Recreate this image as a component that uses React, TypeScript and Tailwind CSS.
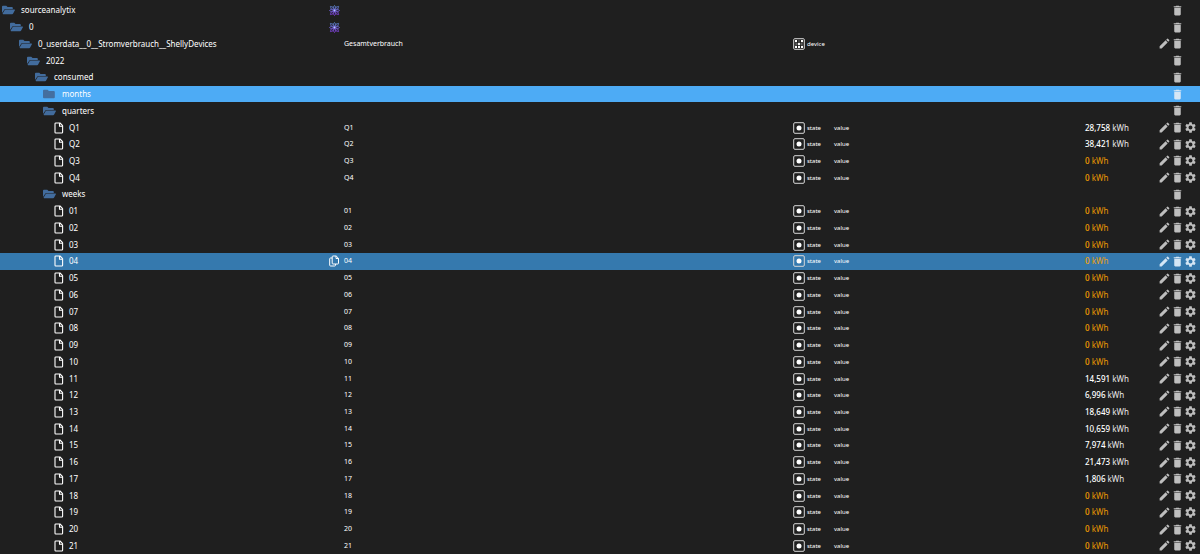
import { MdDelete, MdEdit, MdSettings } from "react-icons/md";

type Row = {
    id: string;
    depth: number;
    kind: "folder" | "open" | "state";
    name?: string;
    adapter?: boolean;
    device?: boolean;
    value?: string;
    selected?: boolean;
    hovered?: boolean;
};

const INDENT = ["pl-[2px]", "pl-[10px]", "pl-[19px]", "pl-[27px]", "pl-[35px]", "pl-[43px]", "pl-[54px]"];

const state = (id: string, value = "0"): Row => ({ id, depth: 6, kind: "state", name: id, value });

const rows: Row[] = [
    { id: "sourceanalytix", depth: 0, kind: "open", adapter: true },
    { id: "0", depth: 1, kind: "open", adapter: true },
    { id: "0_userdata__0__Stromverbrauch__ShellyDevices", depth: 2, kind: "open", name: "Gesamtverbrauch", device: true },
    { id: "2022", depth: 3, kind: "open" },
    { id: "consumed", depth: 4, kind: "open" },
    { id: "months", depth: 5, kind: "folder", selected: true },
    { id: "quarters", depth: 5, kind: "open" },
    state("Q1", "28,758"),
    state("Q2", "38,421"),
    state("Q3"),
    state("Q4"),
    { id: "weeks", depth: 5, kind: "open" },
    state("01"),
    state("02"),
    state("03"),
    { ...state("04"), hovered: true },
    state("05"),
    state("06"),
    state("07"),
    state("08"),
    state("09"),
    state("10"),
    state("11", "14,591"),
    state("12", "6,996"),
    state("13", "18,649"),
    state("14", "10,659"),
    state("15", "7,974"),
    state("16", "21,473"),
    state("17", "1,806"),
    state("18"),
    state("19"),
    state("20"),
    state("21"),
];

function FileIcon() {
    return (
        <svg viewBox="0 0 10 12" className="h-3 w-[10px] shrink-0" fill="none" stroke="currentColor" strokeWidth="1.1" strokeLinejoin="round">
            <path d="M1.800 1h4.200L8.600 3.700V10.200a.8.8 0 0 1-.8.8H1.800a.8.8 0 0 1-.8-.8V1.800a.8.8 0 0 1 .8-.8Z" />
            <path d="M5.500 1v3.200h3.100" />
        </svg>
    );
}

function FolderIcon() {
    return (
        <svg viewBox="0 0 13 12" className="h-3 w-[13px] shrink-0" fill="#446f9f">
            <path d="M1 1.800h3.600l1.300 1.200h4.900a1 1 0 0 1 1 1V9.200a1 1 0 0 1-1 1H1a1 1 0 0 1-1-1V2.800a1 1 0 0 1 1-1Z" />
        </svg>
    );
}

function FolderOpenIcon() {
    return (
        <svg viewBox="0 0 13 12" className="h-3 w-[13px] shrink-0" fill="#426c9d">
            <path d="M.9 1.800h3.400l1.200 1.100h4.400a.9.9 0 0 1 .9.900v1.200H3.500a1.500 1.500 0 0 0-1.300.7L0 9V2.700A.9.9 0 0 1 .9 1.800Z" />
            <path d="M3.500 5.500h9c.4 0 .6.4.4.7l-1.900 3.500a.9.9 0 0 1-.8.500H1.100c-.4 0-.6-.4-.4-.7l2-3.500a.9.9 0 0 1 .8-.5Z" />
        </svg>
    );
}

function CopyIcon() {
    return (
        <svg viewBox="0 0 12 12" className="h-3 w-3" fill="none" stroke="currentColor" strokeWidth="1" strokeLinejoin="round">
            <path d="M4 1h3.200l2.300 2.300V8.200a.8.8 0 0 1-.8.8H4a.8.8 0 0 1-.8-.8V1.800A.8.8 0 0 1 4 1Z" />
            <path d="M7 1v2.500h2.500M3.200 3H1.500a.8.8 0 0 0-.8.8v6.400a.8.8 0 0 0 .8.8h4.200a.8.8 0 0 0 .8-.8V9" />
        </svg>
    );
}

function AdapterIcon() {
    return (
        <svg viewBox="0 0 24 24" className="h-[11px] w-[11px]" fill="none" strokeWidth="1.600">
            <defs>
                <linearGradient id="adapter" x1="0" y1="0" x2="0" y2="24" gradientUnits="userSpaceOnUse">
                    <stop stopColor="#5c93d6" />
                    <stop offset="1" stopColor="#8b35e8" />
                </linearGradient>
            </defs>
            <g stroke="url(#adapter)">
                <path d="M12 1l3.500 5L12 12 8.500 6ZM12 23l3.500-5L12 12l-3.500 6ZM1 12l5-3.500L12 12l-6 3.500ZM23 12l-5-3.500L12 12l6 3.500Z" />
                <path d="M3 3l7 2 2 7-7-2ZM21 3l-7 2-2 7 7-2ZM3 21l7-2 2-7-7 2ZM21 21l-7-2-2-7 7 2Z" />
            </g>
            <circle cx="12" cy="12" r="2" fill="#b7c6ff" />
        </svg>
    );
}

function StateIcon() {
    return (
        <svg viewBox="0 0 12 12" className="h-3 w-3 shrink-0">
            <rect x=".7" y=".7" width="10.600" height="10.600" rx="1.200" fill="none" stroke="#d8d8d8" />
            <circle cx="6" cy="6" r="2.500" fill="#fff" />
        </svg>
    );
}

function DeviceIcon() {
    return (
        <svg viewBox="0 0 12 12" className="h-3 w-3 shrink-0" fill="none" stroke="#d8d8d8">
            <rect x=".7" y=".7" width="10.600" height="10.600" rx="1" />
            <g fill="#fff" stroke="none">
                <rect x="2" y="2" width="2" height="2" />
                <rect x="8" y="2" width="2" height="2" />
                <rect x="5" y="5" width="2" height="2" />
                <rect x="2" y="8" width="2" height="2" />
                <rect x="5" y="8" width="2" height="2" />
                <rect x="8" y="8" width="2" height="2" />
            </g>
            <path d="M3 4v4M6 2v6M9 4v4M3 6h6" strokeWidth=".4" />
        </svg>
    );
}

function TreeIcon({ kind }: { kind: Row["kind"] }) {
    if (kind === "state") return <FileIcon />;
    return kind === "folder" ? <FolderIcon /> : <FolderOpenIcon />;
}

function ObjectRow({ row }: { row: Row }) {
    const isState = row.kind === "state";
    const background = row.selected ? "bg-[#4dabf5]" : row.hovered ? "bg-[#3579ae]" : "";
    const action = row.selected || row.hovered ? "text-[#d5e6f5]" : "text-[#bebebe]";
    const button = "flex h-[13px] w-[13px] items-center justify-center";

    return (
        <tr className={`grid min-h-4 flex-1 grid-cols-[minmax(0,329fr)_minmax(0,464fr)_41px_minmax(0,251fr)_73px_42px] items-center ${background}`}>
            <td className={`flex items-center text-[8px] ${isState ? "gap-[5px]" : "gap-[6px]"} ${INDENT[row.depth]}`}>
                <TreeIcon kind={row.kind} />
                <span>{row.id}</span>
            </td>
            <td className="flex items-center gap-[3px] text-[7px]">
                <span className="flex w-3 shrink-0">
                    {row.adapter && <AdapterIcon />}
                    {row.hovered && (
                        <button type="button" aria-label={`Copy ${row.id}`}>
                            <CopyIcon />
                        </button>
                    )}
                </span>
                <span>{row.name}</span>
            </td>
            <td className="flex items-center gap-[2px] text-[6px]">
                {isState && <><StateIcon />state</>}
                {row.device && <><DeviceIcon />device</>}
            </td>
            <td className="text-[6px]">{isState && "value"}</td>
            <td className={`text-[8px] ${row.value === "0" ? "text-[#ffa500]" : "text-white"}`}>
                {isState && <><span className="font-medium">{row.value}</span> <span className="opacity-90">kWh</span></>}
            </td>
            <td className={`flex items-center ${action}`}>
                <span className="flex w-[13px]">
                    {(isState || row.device) && (
                        <button type="button" aria-label={`Edit ${row.id}`} className={button}><MdEdit size={13} /></button>
                    )}
                </span>
                <button type="button" aria-label={`Delete ${row.id}`} className={button}><MdDelete size={13} /></button>
                {isState && (
                    <button type="button" aria-label={`Settings for ${row.id}`} className={button}><MdSettings size={13} /></button>
                )}
            </td>
        </tr>
    );
}

export default function App() {
    return (
        <table className="block w-full bg-[#1f1f1f] font-['Noto_Sans',sans-serif] leading-3 whitespace-nowrap text-white">
            <tbody className="flex min-h-screen flex-col pt-[2px]">
                {rows.map((row, i) => (
                    <ObjectRow key={i} row={row} />
                ))}
            </tbody>
        </table>
    );
}
